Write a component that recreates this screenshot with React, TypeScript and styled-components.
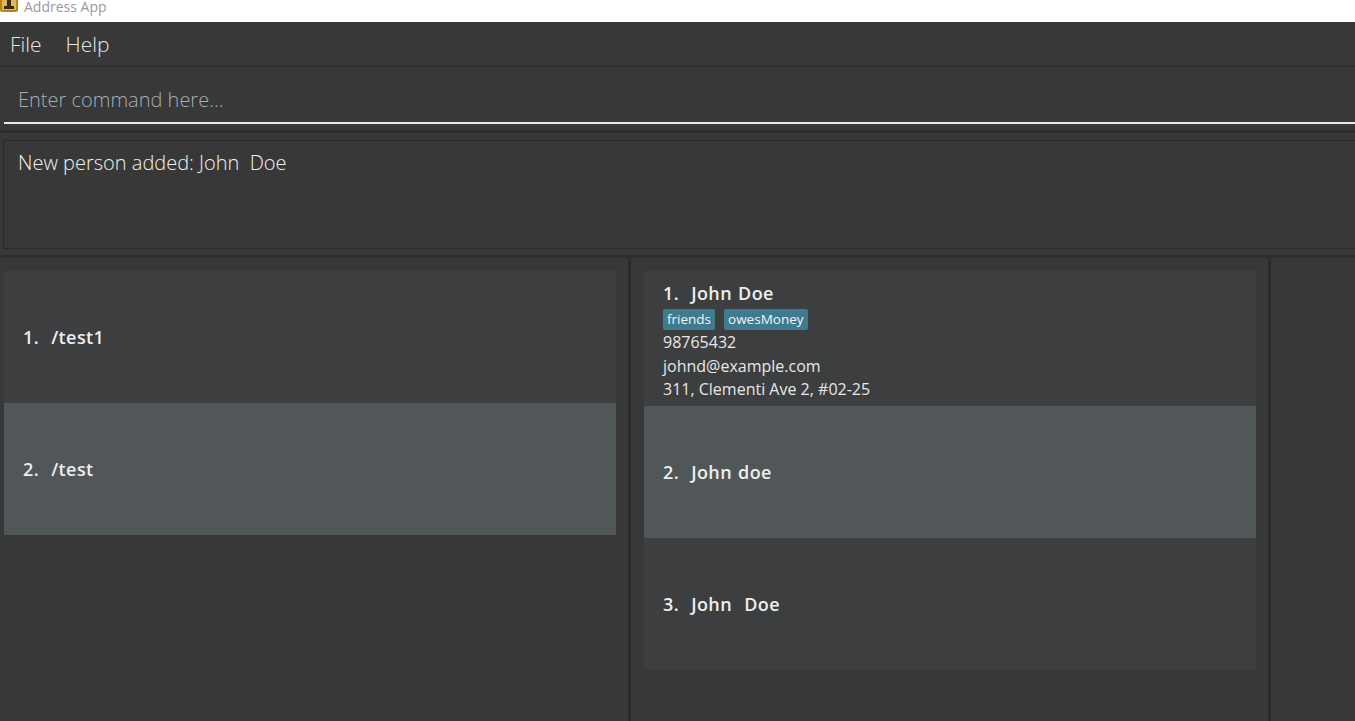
import React from "react";
import styled, { createGlobalStyle } from "styled-components";

const GlobalStyle = createGlobalStyle`
  html, body {
    margin: 0;
    padding: 0;
    background: #383838;
    overflow: hidden;
  }
  * {
    box-sizing: border-box;
  }
`;

const Window = styled.div`
  width: 1355px;
  height: 721px;
  display: flex;
  flex-direction: column;
  background: #383838;
  font-family: "Open Sans", "Noto Sans", sans-serif;
  color: #f0f0f0;
`;

const TitleBar = styled.div`
  height: 22px;
  flex: none;
  background: #ffffff;
  display: flex;
  align-items: flex-end;
  gap: 6px;
  overflow: hidden;
  padding-bottom: 10px;
`;

const AppIcon = styled.svg`
  flex: none;
  display: block;
`;

const TitleText = styled.span`
  font-family: "Open Sans", sans-serif;
  font-size: 14px;
  line-height: 18px;
  margin-bottom: -4px;
  color: #9a9a9a;
`;

const MenuBar = styled.div`
  height: 45px;
  flex: none;
  display: flex;
  align-items: center;
  gap: 24px;
  padding-left: 10px;
  border-bottom: 1px solid #2c2c2c;
`;

const MenuItem = styled.span`
  font-size: 21px;
  font-weight: 300;
  color: #e6e6e6;
`;

const CommandPane = styled.div`
  height: 63px;
  flex: none;
  padding: 0 0 6px 4px;
  display: flex;
`;

const CommandInput = styled.div`
  flex: 1;
  display: flex;
  align-items: center;
  padding: 10px 0 0 14px;
  border-bottom: 2px solid #e8e8e8;
  font-size: 20px;
  font-weight: 300;
  color: #a5adb5;
`;

const Separator = styled.div<{ $h: number }>`
  height: ${(p) => p.$h}px;
  flex: none;
  background: #2d2d2d;
`;

const ResultPane = styled.div`
  height: 122px;
  flex: none;
  padding: 7px 0 6px 3px;
  display: flex;
`;

const ResultBox = styled.div`
  flex: 1;
  border: 1px solid #2b2b2b;
  border-right: none;
  padding: 8px 14px 0;
  font-size: 20px;
  font-weight: 300;
  color: #f2f2f2;
  white-space: pre;
`;

const Panels = styled.div`
  flex: 1;
  display: flex;
  min-height: 0;
`;

const ListPanel = styled.div<{ $w: number; $left: number }>`
  width: ${(p) => p.$w}px;
  flex: none;
  padding: 13px 12px 0 ${(p) => p.$left}px;
  display: flex;
  flex-direction: column;
`;

const Filler = styled.div`
  flex: 1;
`;

const Divider = styled.div`
  width: 3px;
  flex: none;
  background: #2b2b2b;
`;

const Cell = styled.div<{ $odd: boolean; $h?: number }>`
  min-height: ${(p) => p.$h ?? 132}px;
  flex: none;
  background: ${(p) => (p.$odd ? "#515658" : "#3c3e3f")};
  padding: 0 19px;
  display: flex;
  flex-direction: column;
  justify-content: center;
`;

const DetailCell = styled.div`
  height: 135px;
  flex: none;
  background: #3c3e3f;
  padding: 10px 19px 0;
  display: flex;
  flex-direction: column;
`;

const Name = styled.div`
  font-size: 18px;
  font-weight: 600;
  letter-spacing: 0.4px;
  word-spacing: 1px;
  color: #eeeeee;
  white-space: pre;
  line-height: 25px;
`;

const Tags = styled.div`
  display: flex;
  gap: 9px;
  margin: 3px 0 1px;
`;

const Tag = styled.span`
  background: #3e7b91;
  color: #f4f4f4;
  font-size: 13.5px;
  line-height: 21px;
  padding: 0 4px;
  border-radius: 2px;
`;

const Detail = styled.div`
  font-size: 16px;
  line-height: 23.5px;
  color: #e8e8e8;
`;

const folders = ["/test1", "/test"];
const people = ["John doe", "John  Doe"];

export default function App() {
  return (
    <Window>
      <GlobalStyle />
      <TitleBar>
        <AppIcon width="18" height="18" viewBox="0 0 18 18">
          <rect x="0" y="0" width="18" height="18" rx="2" fill="#b8860b" />
          <rect x="2" y="2" width="14" height="14" rx="1" fill="#e2b659" />
          <rect x="7" y="3" width="4" height="11" fill="#3a2a10" />
          <rect x="4" y="12" width="10" height="3" fill="#3a2a10" />
        </AppIcon>
        <TitleText>Address App</TitleText>
      </TitleBar>
      <MenuBar>
        <MenuItem>File</MenuItem>
        <MenuItem>Help</MenuItem>
      </MenuBar>
      <CommandPane>
        <CommandInput>Enter command here...</CommandInput>
      </CommandPane>
      <Separator $h={3} />
      <ResultPane>
        <ResultBox>New person added: John  Doe</ResultBox>
      </ResultPane>
      <Separator $h={3} />
      <Panels>
        <ListPanel $w={628} $left={4}>
          {folders.map((f, i) => (
            <Cell key={f} $odd={i % 2 === 1}>
              <Name>{`${i + 1}.  ${f}`}</Name>
            </Cell>
          ))}
        </ListPanel>
        <Divider />
        <ListPanel $w={637} $left={13}>
          <DetailCell>
            <Name>{"1.  John Doe"}</Name>
            <Tags>
              <Tag>friends</Tag>
              <Tag>owesMoney</Tag>
            </Tags>
            <Detail>98765432</Detail>
            <Detail>johnd@example.com</Detail>
            <Detail>311, Clementi Ave 2, #02-25</Detail>
          </DetailCell>
          {people.map((p, i) => (
            <Cell key={i} $odd={i % 2 === 0}>
              <Name>{`${i + 2}.  ${p}`}</Name>
            </Cell>
          ))}
        </ListPanel>
        <Divider />
        <Filler />
      </Panels>
    </Window>
  );
}
